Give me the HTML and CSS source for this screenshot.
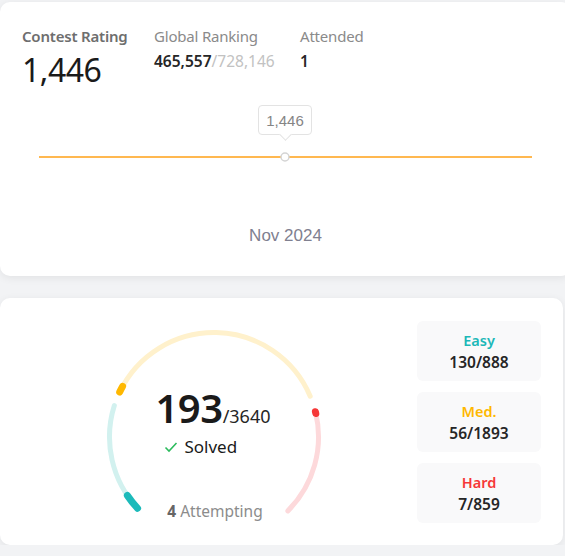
FILE: index.html
```html
<!DOCTYPE html>
<html>
<head>
<meta charset="utf-8">
<link rel="stylesheet" href="styles.css">
</head>
<body>
<div class="page">
  <section class="card rating-card">
    <div class="stats">
      <div class="stat">
        <div class="stat-label strong">Contest Rating</div>
        <div class="rating-value">1,446</div>
      </div>
      <div class="stat">
        <div class="stat-label">Global Ranking</div>
        <div class="stat-value">465,557<span class="muted">/728,146</span></div>
      </div>
      <div class="stat">
        <div class="stat-label">Attended</div>
        <div class="stat-value">1</div>
      </div>
    </div>
    <div class="chart">
      <svg class="chart-svg" width="571" height="40" viewBox="0 0 571 40">
        <line x1="39" y1="20" x2="532" y2="20" stroke="#ffa116" stroke-width="1.3"/>
        <circle cx="285" cy="20" r="4" fill="#fff" stroke="#d4d4d4" stroke-width="1.5"/>
      </svg>
      <div class="tooltip">1,446</div>
    </div>
    <div class="chart-date">Nov 2024</div>
  </section>

  <section class="card solved-card">
    <div class="gauge">
      <svg class="gauge-svg" width="220" height="200" viewBox="0 0 220 200">
        <g fill="none" stroke-linecap="round">
          <path d="M33.57 181.27 A104.5 104.5 0 0 1 10.34 78.58" stroke="#d2f1ef" stroke-width="5"/>
          <path d="M15.68 65.01 A104.5 104.5 0 0 1 206.19 69.17" stroke="#fff1cc" stroke-width="5"/>
          <path d="M211.39 84.72 A104.5 104.5 0 0 1 183.89 183.89" stroke="#fdd9db" stroke-width="5"/>
          <path d="M33.57 181.27 A104.5 104.5 0 0 1 23.37 168.44" stroke="#1cbaba" stroke-width="7"/>
          <path d="M15.68 65.01 A104.5 104.5 0 0 1 18.60 59.34" stroke="#ffb800" stroke-width="7"/>
          <path d="M211.39 84.72 A104.5 104.5 0 0 1 211.82 86.49" stroke="#f63737" stroke-width="7"/>
        </g>
      </svg>
      <div class="gauge-center">
        <div class="solved-count"><span class="big">193</span><span class="total">/3640</span></div>
        <div class="solved-label">
          <svg class="check" width="14" height="12" viewBox="0 0 14 12"><path d="M1.5 6.5 L5 10 L12.5 2" fill="none" stroke="#2cbb5d" stroke-width="1.6"/></svg>
          <span>Solved</span>
        </div>
      </div>
      <div class="attempting"><b>4</b> Attempting</div>
    </div>
    <div class="levels">
      <div class="level">
        <div class="level-name easy">Easy</div>
        <div class="level-count">130/888</div>
      </div>
      <div class="level">
        <div class="level-name med">Med.</div>
        <div class="level-count">56/1893</div>
      </div>
      <div class="level">
        <div class="level-name hard">Hard</div>
        <div class="level-count">7/859</div>
      </div>
    </div>
  </section>
</div>
</body>
</html>
```
FILE: styles.css
```css
html, body {
  margin: 0;
  padding: 0;
  overflow: hidden;
  background: #f2f3f5;
}
body {
  font-family: "Noto Sans", "Open Sans", sans-serif;
  color: #1a1a1a;
}
.page {
  padding-top: 2px;
  display: flex;
  flex-direction: column;
  gap: 22px;
}
.card {
  background: #fff;
  border-radius: 10px;
  box-shadow: 0 2px 8px rgba(0, 0, 0, 0.07);
}
.rating-card {
  width: 571px;
  height: 274px;
  box-sizing: border-box;
  padding: 24px 0 0 22px;
}
.stats {
  display: grid;
  grid-template-columns: 132px 146px auto;
}
.stat-label {
  font-size: 15px;
  line-height: 20px;
  color: #8a8a8a;
  letter-spacing: -0.2px;
}
.stat-label.strong {
  font-weight: 600;
  color: #6e6e6e;
}
.rating-value {
  font-size: 32px;
  line-height: 36px;
  margin-top: 6px;
  color: #1a1a1a;
  letter-spacing: -0.5px;
}
.stat-value {
  font-size: 15.5px;
  font-weight: 600;
  line-height: 20px;
  margin-top: 5px;
  color: #262626;
}
.stat-value .muted {
  color: #c2c2c2;
  font-weight: 400;
}
.chart {
  position: relative;
  margin-left: -22px;
  margin-top: 49px;
  height: 40px;
}
.chart-svg {
  display: block;
}
.tooltip {
  position: absolute;
  left: 258px;
  top: -32px;
  width: 54px;
  height: 30px;
  box-sizing: border-box;
  border: 1px solid #e3e3e3;
  border-radius: 4px;
  background: #fff;
  font-family: "Liberation Sans", Arial, sans-serif;
  font-size: 15px;
  color: #858585;
  display: flex;
  align-items: center;
  justify-content: center;
}
.tooltip::after {
  content: "";
  position: absolute;
  left: 22px;
  bottom: -5px;
  width: 8px;
  height: 8px;
  background: #fff;
  border-right: 1px solid #e3e3e3;
  border-bottom: 1px solid #e3e3e3;
  transform: rotate(45deg);
}
.chart-date {
  margin-left: -22px;
  width: 571px;
  text-align: center;
  margin-top: 49px;
  font-family: "Liberation Sans", Arial, sans-serif;
  font-size: 17px;
  color: #808090;
}
.solved-card {
  width: 563px;
  height: 247px;
  box-sizing: border-box;
  padding: 23px 22px 21px 22px;
  display: flex;
  align-items: flex-start;
  justify-content: space-between;
}
.gauge {
  position: relative;
  width: 220px;
  height: 200px;
  margin-left: 82px;
  margin-top: 6px;
  display: flex;
  flex-direction: column;
  align-items: center;
}
.gauge-svg {
  position: absolute;
  left: 0;
  top: 0;
}
.gauge-center {
  margin-top: 62px;
  margin-left: -2px;
  display: flex;
  flex-direction: column;
  align-items: flex-start;
}
.solved-count {
  display: flex;
  align-items: baseline;
  height: 38px;
}
.big {
  font-size: 40px;
  line-height: 38px;
  font-weight: 600;
  color: #1a1a1a;
  letter-spacing: -0.5px;
}
.total {
  font-size: 18px;
  line-height: 20px;
  color: #262626;
}
.solved-label {
  display: flex;
  align-items: center;
  gap: 6px;
  margin-left: 9px;
  margin-top: 8px;
  font-size: 17px;
  line-height: 24px;
  color: #1a1a1a;
}
.check {
  display: block;
}
.attempting {
  margin-top: 42px;
  margin-left: 2px;
  font-size: 15.5px;
  line-height: 20px;
  color: #8c8c8c;
}
.attempting b {
  color: #666;
  font-weight: 700;
}
.levels {
  width: 124px;
  display: flex;
  flex-direction: column;
  gap: 11px;
}
.level {
  height: 60px;
  border-radius: 6px;
  background: #f9f9fa;
  display: flex;
  flex-direction: column;
  align-items: center;
  justify-content: center;
}
.level-name {
  font-size: 14.5px;
  font-weight: 600;
  line-height: 21px;
}
.level-count {
  font-size: 15.5px;
  font-weight: 600;
  line-height: 22px;
  color: #262626;
}
.easy { color: #1cb8b8; }
.med { color: #ffb800; }
.hard { color: #f63737; }
```
